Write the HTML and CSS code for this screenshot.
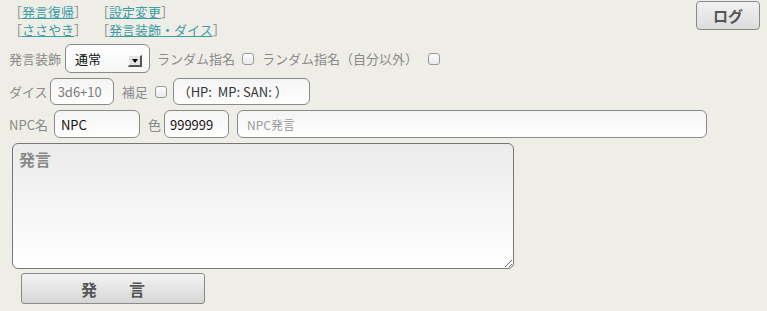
FILE: index.html
```html
<!DOCTYPE html>
<html lang="ja">
<head>
<meta charset="utf-8">
<link rel="stylesheet" href="styles.css">
</head>
<body>
<div class="page">
  <div class="top">
    <div class="links">
      <span class="lk">［<a href="#">発言復帰</a>］</span>
      <span class="lk">［<a href="#">設定変更</a>］</span>
      <span class="lk">［<a href="#">ささやき</a>］</span>
      <span class="lk">［<a href="#">発言装飾・ダイス</a>］</span>
    </div>
    <button class="log">ログ</button>
  </div>

  <div class="row row1">
    <span class="lbl">発言装飾</span>
    <span class="sel-wrap">
      <select class="sel"><option>通常</option></select>
      <span class="sel-arrow"></span>
    </span>
    <span class="lbl gap7">ランダム指名</span>
    <input type="checkbox" class="cb gap7">
    <span class="lbl gap8">ランダム指名（自分以外）</span>
    <input type="checkbox" class="cb gap10">
  </div>

  <div class="row row2">
    <span class="lbl">ダイス</span>
    <input class="inp dice" type="text" value="3d6+10">
    <span class="lbl gap8">補足</span>
    <input type="checkbox" class="cb gap7">
    <input class="inp hosoku" type="text" value="（HP:  MP: SAN: ）">
  </div>

  <div class="row row3">
    <span class="lbl">NPC名</span>
    <input class="inp npc" type="text" value="NPC">
    <span class="lbl gap8">色</span>
    <input class="inp color" type="text" value="999999">
    <input class="inp npcsay" type="text" placeholder="NPC発言">
  </div>

  <textarea class="say" placeholder="発言"></textarea>

  <button class="submit">発　　言</button>
</div>
</body>
</html>
```

FILE: styles.css
```css
* { box-sizing: border-box; }

html, body {
  margin: 0;
  padding: 0;
  background: #efeee6;
}

body {
  font-family: "Noto Sans CJK JP", "Noto Sans", sans-serif;
  font-size: 13px;
  color: #8a8a8a;
}

.page {
  padding: 3px 9px 0 9px;
}

.top {
  display: flex;
  justify-content: space-between;
  align-items: flex-start;
}

.links {
  display: grid;
  grid-template-columns: 87px auto;
  line-height: 18px;
  color: #8a8a8a;
}

.lk a {
  color: #3d9ea6;
  text-decoration: underline;
}

.log {
  margin: -2px -2px 0 0;
  width: 64px;
  height: 29px;
  border: 1px solid #8a8a8a;
  border-radius: 4px;
  background: linear-gradient(#f2f2f2, #dcdcdc);
  font-family: "Noto Sans CJK JP", sans-serif;
  font-size: 15px;
  font-weight: bold;
  color: #555;
  padding: 0;
}

.row {
  display: flex;
  align-items: center;
}

.row1 { margin-top: 5px; height: 29px; }
.row2 { margin-top: 5px; height: 27px; }
.row3 { margin-top: 5px; height: 28px; }

.lbl { white-space: nowrap; }
.gap7 { margin-left: 7px; }
.gap8 { margin-left: 8px; }
.gap10 { margin-left: 10px; }

.sel-wrap {
  position: relative;
  margin-left: 4px;
  height: 29px;
}

.sel {
  appearance: none;
  -webkit-appearance: none;
  width: 85px;
  height: 29px;
  border: 1px solid #8a8a8a;
  border-radius: 6px;
  background: linear-gradient(#ffffff, #f6f6f6);
  font-family: "Noto Sans CJK JP", sans-serif;
  font-size: 13px;
  color: #111;
  padding: 0 0 0 9px;
}

.sel-arrow {
  position: absolute;
  right: 8px;
  top: 11px;
  width: 14px;
  height: 12px;
  background: #e6e6e6;
  border-top: 1px solid #fdfdfd;
  border-left: 1px solid #fdfdfd;
  border-right: 2px solid #555;
  border-bottom: 2px solid #555;
  pointer-events: none;
}

.sel-arrow::after {
  content: "";
  position: absolute;
  left: 3px;
  top: 3px;
  border-left: 3px solid transparent;
  border-right: 3px solid transparent;
  border-top: 4px solid #000;
}

.cb {
  appearance: none;
  -webkit-appearance: none;
  width: 12px;
  height: 12px;
  margin-top: 0;
  margin-bottom: 0;
  margin-right: 0;
  border: 1px solid #9a9a9a;
  border-radius: 3px;
  background: linear-gradient(#ffffff, #e9e9e9);
}

.inp {
  height: 100%;
  border: 1px solid #8a8a8a;
  border-radius: 6px;
  background: linear-gradient(#f4f4f4, #ffffff);
  font-family: "Noto Sans CJK JP", sans-serif;
  font-size: 13px;
  color: #111;
  padding: 0 0 0 7px;
}

.inp::placeholder { color: #999; font-size: 12px; }

.dice {
  margin-left: 2px;
  width: 64px;
  color: #7a7a7a;
}

.hosoku {
  margin-left: 6px;
  width: 137px;
  color: #333;
  padding-left: 4px;
}

.npc {
  margin-left: 6px;
  width: 86px;
  padding-left: 6px;
}

.color {
  margin-left: 3px;
  width: 65px;
  padding-left: 5px;
}

.npcsay {
  margin-left: 8px;
  width: 470px;
  padding-left: 9px;
}

.say {
  display: block;
  margin: 5px 0 0 3px;
  width: 502px;
  height: 126px;
  border: 1px solid #777;
  border-radius: 6px;
  background: linear-gradient(#ebebeb, #ffffff);
  font-family: "Noto Sans CJK JP", sans-serif;
  font-size: 16px;
  color: #333;
  padding: 3px 6px;
}

.say::placeholder { color: #8a8a8a; font-weight: bold; }

.submit {
  display: block;
  margin: 4px 0 0 12px;
  width: 184px;
  height: 31px;
  border: 1px solid #8a8a8a;
  border-radius: 3px;
  background: linear-gradient(#f4f4f4, #d6d6d6);
  font-family: "Noto Sans CJK JP", sans-serif;
  font-size: 16px;
  font-weight: bold;
  color: #555;
  padding: 0;
}
```
